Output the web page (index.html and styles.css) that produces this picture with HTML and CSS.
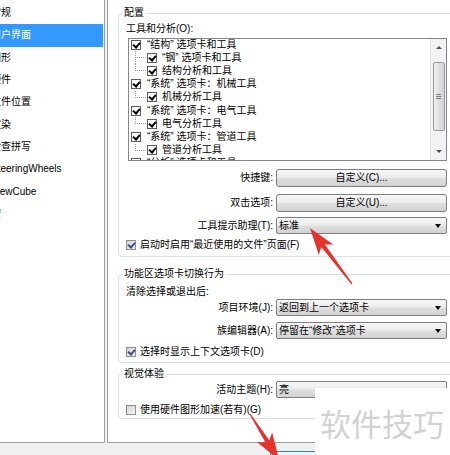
FILE: index.html
```html
<!DOCTYPE html>
<html lang="zh-CN">
<head>
    <meta charset="UTF-8">
    <title>选项 - 用户界面</title>
    <link rel="stylesheet" href="styles.css">
</head>
<body>
    <div class="panes">
        <ul class="nav">
            <li>常规</li>
            <li class="active">用户界面</li>
            <li>图形</li>
            <li>硬件</li>
            <li>文件位置</li>
            <li>渲染</li>
            <li>检查拼写</li>
            <li>SteeringWheels</li>
            <li>ViewCube</li>
            <li>宏</li>
        </ul>

        <div class="main">
            <fieldset class="group g-config">
                <legend>配置</legend>
                <div class="field-title">工具和分析(O):</div>
                <div class="tree-box">
                    <ul class="tree">
                        <li class="root"><span class="cb on"></span>“结构” 选项卡和工具</li>
                        <li class="leaf"><span class="branch mid"></span><span class="cb on"></span>“钢” 选项卡和工具</li>
                        <li class="leaf"><span class="branch"></span><span class="cb on"></span>结构分析和工具</li>
                        <li class="root"><span class="cb on"></span>“系统” 选项卡：机械工具</li>
                        <li class="leaf"><span class="branch"></span><span class="cb on"></span>机械分析工具</li>
                        <li class="root"><span class="cb on"></span>“系统” 选项卡：电气工具</li>
                        <li class="leaf"><span class="branch"></span><span class="cb on"></span>电气分析工具</li>
                        <li class="root"><span class="cb on"></span>“系统” 选项卡：管道工具</li>
                        <li class="leaf"><span class="branch"></span><span class="cb on"></span>管道分析工具</li>
                        <li class="root"><span class="cb"></span>“分析” 选项卡和工具</li>
                    </ul>
                    <div class="vscroll">
                        <span class="sb-btn"><i class="tri up"></i></span>
                        <span class="thumb"><i class="grip"></i></span>
                        <span class="sb-fill"></span>
                        <span class="sb-btn"><i class="tri down"></i></span>
                    </div>
                </div>

                <div class="form-row row-keys">
                    <label>快捷键:</label>
                    <button class="btn">自定义(C)...</button>
                </div>
                <div class="form-row row-dbl">
                    <label>双击选项:</label>
                    <button class="btn">自定义(U)...</button>
                </div>
                <div class="form-row row-tips">
                    <label>工具提示助理(T):</label>
                    <div class="combo">标准</div>
                </div>
                <div class="check-row row-recent">
                    <span class="wcb on"></span>启动时启用“最近使用的文件”页面(F)
                </div>
            </fieldset>

            <fieldset class="group g-ribbon">
                <legend>功能区选项卡切换行为</legend>
                <div class="field-title after-legend">清除选择或退出后:</div>
                <div class="form-row">
                    <label>项目环境(J):</label>
                    <div class="combo">返回到上一个选项卡</div>
                </div>
                <div class="form-row row-family">
                    <label>族编辑器(A):</label>
                    <div class="combo">停留在“修改”选项卡</div>
                </div>
                <div class="check-row row-context">
                    <span class="wcb on"></span>选择时显示上下文选项卡(D)
                </div>
            </fieldset>

            <fieldset class="group g-visual">
                <legend>视觉体验</legend>
                <div class="form-row">
                    <label>活动主题(H):</label>
                    <div class="combo">亮</div>
                </div>
                <div class="check-row row-gpu">
                    <span class="wcb"></span>使用硬件图形加速(若有)(G)
                </div>
            </fieldset>
        </div>
    </div>

    <div class="footer">
        <button class="ok-btn">确定</button>
    </div>

    <div class="watermark">软件技巧</div>

    <!-- red pointers -->
    <svg class="marks" width="450" height="455" viewBox="0 0 450 455">
        <polygon points="310,228 333.2,244.4 324.9,244.4 352.5,283.6 351.5,284.4 321.3,247 318.8,255"/>
        <polygon points="279,460 272.2,432.4 269.2,440.2 250.5,413.7 249.5,414.3 265.4,442.6 257,442"/>
    </svg>
</body>
</html>
```

FILE: styles.css
```css
body {
    margin: 0;
    width: 450px;
    height: 455px;
    overflow: hidden;
    position: relative;
    background: #f0f0f0;
    font-family: "Liberation Sans", "Noto Sans CJK SC", sans-serif;
    font-size: 10px;
    line-height: 14px;
    color: #000;
}
.panes {
    display: flex;
    gap: 2px;
    height: 443px;
}

/* left category list */
.nav {
    margin: 0;
    padding: 2px 0 0;
    list-style: none;
    width: 105px;
    flex: none;
    box-sizing: border-box;
    background: #fff;
    border-right: 1px solid #a0a0a0;
    border-bottom: 1px solid #a0a0a0;
    overflow: hidden;
}
.nav li {
    height: 22.33px;
    line-height: 22px;
    text-indent: -9px;
    white-space: nowrap;
}
.nav li.active {
    background: #3399ff;
    color: #fff;
    margin-right: 1px;
}

/* right options page */
.main {
    flex: 1;
    background: #fff;
    border-left: 1px solid #a0a0a0;
    border-bottom: 1px solid #a0a0a0;
    padding-left: 10px;
    overflow: hidden;
}
.group {
    width: 360px;
    box-sizing: border-box;
    margin: 0;
    padding: 0 0 0 7px;
    border: 1px solid #d8e0e6;
    border-radius: 4px;
}
.group legend {
    margin-left: -4px;
    padding: 0 2px;
    line-height: 14px;
}
.g-config {
    margin-top: 6px;
    padding-bottom: 4px;
}
.g-ribbon {
    margin-top: 10px;
    padding-bottom: 3px;
}
.g-visual {
    margin-top: 4px;
    padding-bottom: 1px;
}
.field-title {
    margin-top: 2px;
}
.field-title.after-legend {
    margin-top: 4px;
}

/* tree with checkboxes */
.tree-box {
    display: flex;
    width: 319px;
    height: 123px;
    margin: 2px 0 0 2px;
    box-sizing: border-box;
    border: 1px solid #828790;
    background: #fff;
}
.tree {
    flex: 1;
    margin: -1px 0 0;
    padding: 0 0 0 2px;
    list-style: none;
    overflow: hidden;
}
.tree li {
    display: flex;
    align-items: center;
    height: 13.2px;
    white-space: nowrap;
}
.tree li.root .cb {
    margin-right: 6px;
}
.branch {
    align-self: stretch;
    width: 12px;
    margin-left: 4px;
    flex: none;
    background:
        repeating-linear-gradient(to bottom, #a0a0a0 0 1px, transparent 1px 2px) left top / 1px 50% no-repeat,
        repeating-linear-gradient(to right, #a0a0a0 0 1px, transparent 1px 2px) left 50% / 100% 1px no-repeat;
}
.branch.mid {
    background-size: 1px 100%, 100% 1px;
}
.cb {
    position: relative;
    flex: none;
    width: 10px;
    height: 10px;
    margin-right: 5px;
    box-sizing: border-box;
    border: 1px solid #5e5e5e;
    background: #fff;
}
.cb.on::after,
.wcb.on::after {
    content: "";
    position: absolute;
    left: 2px;
    top: 0;
    width: 3px;
    height: 5px;
    border-right: 2px solid #000;
    border-bottom: 2px solid #000;
    transform: rotate(40deg);
}

.vscroll {
    width: 15px;
    flex: none;
    display: flex;
    flex-direction: column;
    align-items: center;
    background: #f3f3f3;
    border-left: 1px solid #e6e6e6;
}
.sb-btn {
    height: 17px;
    display: flex;
    align-items: center;
    justify-content: center;
}
.tri {
    border-left: 3px solid transparent;
    border-right: 3px solid transparent;
}
.tri.up {
    border-bottom: 3px solid #505050;
}
.tri.down {
    border-top: 3px solid #505050;
}
.thumb {
    width: 12px;
    height: 69px;
    margin-top: 6px;
    box-sizing: border-box;
    border: 1px solid #9a9a9a;
    border-radius: 2px;
    background: linear-gradient(to right, #f2f2f2, #e0e0e0 50%, #d2d2d2);
    display: flex;
    align-items: center;
    justify-content: center;
}
.grip {
    width: 5px;
    height: 5px;
    background: repeating-linear-gradient(to bottom, #7d7d7d 0 1px, transparent 1px 2px);
}
.sb-fill {
    flex: 1;
}

/* label + control rows */
.form-row {
    display: grid;
    grid-template-columns: 147px 171px;
    column-gap: 3px;
    align-items: center;
    height: 17px;
}
.form-row label {
    text-align: right;
    white-space: nowrap;
}
.row-keys {
    margin-top: 8px;
    height: 18px;
}
.row-dbl {
    margin-top: 7px;
    height: 18px;
}
.row-tips {
    margin-top: 5px;
}
.row-family {
    margin-top: 6px;
}
.btn,
.combo {
    height: 100%;
    box-sizing: border-box;
    border: 1px solid #7f7f7f;
    border-radius: 3px;
    background: linear-gradient(#f7f7f7, #ececec 48%, #dedede 52%, #d3d3d3);
    font: inherit;
    color: #000;
    padding: 0;
}
.combo {
    display: flex;
    align-items: center;
    justify-content: space-between;
    padding: 0 5px 0 2px;
    border-radius: 2px;
    white-space: nowrap;
}
.combo::after {
    content: "";
    border-left: 3px solid transparent;
    border-right: 3px solid transparent;
    border-top: 4px solid #000;
}

.check-row {
    display: flex;
    align-items: center;
    height: 14px;
    white-space: nowrap;
}
.row-recent {
    margin-top: 4px;
}
.row-context {
    margin-top: 6px;
}
.row-gpu {
    margin-top: 5px;
}
.wcb {
    position: relative;
    flex: none;
    width: 10px;
    height: 10px;
    margin-right: 4px;
    box-sizing: border-box;
    border: 1px solid #8f8f8f;
    background: linear-gradient(135deg, #d4d4d4, #f4f4f4);
}
.wcb.on::after {
    border-color: #3d4f8a;
}

.footer {
    height: 12px;
}
.ok-btn {
    display: block;
    width: 70px;
    height: 22px;
    margin: 8px 0 0 270px;
    border: 1px solid #3c7fb1;
    border-radius: 3px;
    background: linear-gradient(#eaf6fd, #bee6fd);
    font: inherit;
}

.watermark {
    position: absolute;
    left: 315px;
    top: 388px;
    right: 0;
    bottom: 0;
    padding: 17px 0 0 5px;
    background: #fff;
    font-family: "Noto Sans CJK SC", sans-serif;
    font-size: 31px;
    line-height: 36px;
    color: #d2d2d2;
    white-space: nowrap;
}
.marks {
    position: absolute;
    left: 0;
    top: 0;
    pointer-events: none;
    fill: #e5322d;
}
```
